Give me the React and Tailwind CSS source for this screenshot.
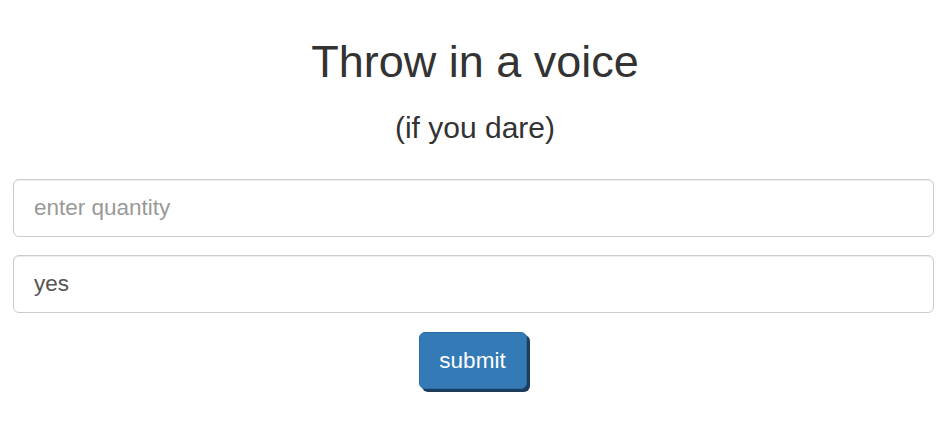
export default function App() {
  return (
    <div className="w-[950px] h-[434px] bg-white font-['Liberation_Sans',Arial,sans-serif] text-[#333]">
      <div className="pt-[37px] text-center">
        <h1 className="text-[45px] leading-[50px]">Throw in a voice</h1>
        <h3 className="mt-[24px] text-[30px] leading-[33px]">(if you dare)</h3>
      </div>
      <form className="mt-[35px] ml-[13px] w-[921px] flex flex-col gap-[18px] items-center" onSubmit={e => e.preventDefault()}>
        <input
          type="text"
          placeholder="enter quantity"
          className="w-full h-[58px] px-[20px] text-[22.5px] text-[#555] placeholder:text-[#999] border border-[#ccc] rounded-[6px] shadow-[inset_0_1px_1px_rgba(0,0,0,0.075)] outline-none"
        />
        <input
          type="text"
          defaultValue="yes"
          className="w-full h-[58px] px-[20px] text-[22.5px] text-[#555] border border-[#ccc] rounded-[6px] shadow-[inset_0_1px_1px_rgba(0,0,0,0.075)] outline-none"
        />
        <button
          type="submit"
          className="mt-[1px] -ml-[2px] w-[108px] h-[57px] text-[22.5px] text-white bg-[#337ab7] border border-[#2e6da4] rounded-[6px] shadow-[3px_3px_0_#1d3d5c]"
        >
          submit
        </button>
      </form>
    </div>
  )
}
